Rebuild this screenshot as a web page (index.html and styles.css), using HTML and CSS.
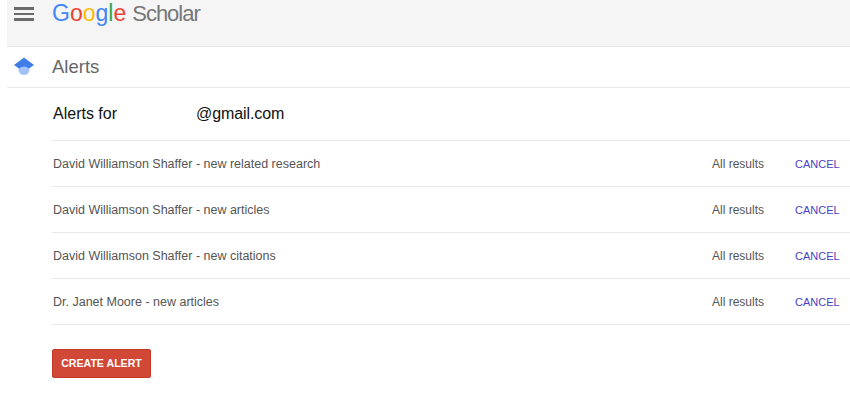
FILE: index.html
```html
<!DOCTYPE html>
<html lang="en">
<head>
  <meta charset="UTF-8">
  <title>Google Scholar Alerts</title>
  <link rel="stylesheet" href="styles.css">
</head>
<body>
  <div class="topbar">
    <div class="menu-icon"><span></span><span></span><span></span></div>
    <div class="logo"><span class="g-blue">G</span><span class="g-red">o</span><span class="g-yellow">o</span><span class="g-blue">g</span><span class="g-green">l</span><span class="g-red">e</span><span class="logo-scholar">Scholar</span></div>
  </div>
  <div class="titlebar">
    <svg class="cap" width="20" height="20" viewBox="0 0 20 20">
      <circle cx="10" cy="12.5" r="5.5" fill="#a1c2fa"/>
      <path d="M0 8 L10 0.5 L20 8 L15 11.5 Q10 7.5 5 11.5 Z" fill="#3f7de8"/>
    </svg>
    <h1>Alerts</h1>
  </div>
  <div class="content">
    <h2 class="alerts-for"><span>Alerts for</span><span class="email">@gmail.com</span></h2>
    <div class="row">
      <div class="name">David Williamson Shaffer - new related research</div>
      <div class="type">All results</div>
      <a class="cancel" href="#">CANCEL</a>
    </div>
    <div class="row">
      <div class="name">David Williamson Shaffer - new articles</div>
      <div class="type">All results</div>
      <a class="cancel" href="#">CANCEL</a>
    </div>
    <div class="row">
      <div class="name">David Williamson Shaffer - new citations</div>
      <div class="type">All results</div>
      <a class="cancel" href="#">CANCEL</a>
    </div>
    <div class="row">
      <div class="name">Dr. Janet Moore - new articles</div>
      <div class="type">All results</div>
      <a class="cancel" href="#">CANCEL</a>
    </div>
    <button class="create">CREATE ALERT</button>
  </div>
</body>
</html>
```

FILE: styles.css
```css
body { margin: 0; padding-left: 7px; background: #fff; font-family: "Liberation Sans", Arial, sans-serif; color: #444; overflow: hidden; }
.topbar { height: 46px; background: #f5f5f5; border-bottom: 1px solid #e5e5e5; display: flex; align-items: flex-start; }
.menu-icon { width: 20px; margin: 7px 0 0 7px; display: flex; flex-direction: column; gap: 3px; }
.menu-icon span { display: block; height: 2.5px; background: #6a6a6a; }
.logo { margin: 0 0 0 18px; font-size: 23px; line-height: 26px; }
.logo-scholar { color: #777; margin-left: 6px; font-size: 22px; letter-spacing: -1px; }
.g-blue { color: #4285f4; }
.g-red { color: #ea4335; }
.g-yellow { color: #fbbc05; }
.g-green { color: #34a853; }
.titlebar { height: 40px; border-bottom: 1px solid #e8e8e8; display: flex; align-items: center; }
.cap { margin-left: 7px; }
.titlebar h1 { margin: 0 0 0 18px; font-size: 18.5px; font-weight: normal; color: #666; }
.content { margin-left: 45px; }
.alerts-for { margin: 0; padding-left: 1px; height: 52px; display: flex; align-items: center; font-size: 16px; font-weight: normal; color: #111; border-bottom: 1px solid #e8e8e8; }
.email { margin-left: 79px; letter-spacing: -0.1px; }
.row { height: 45px; display: flex; align-items: center; border-bottom: 1px solid #e8e8e8; font-size: 12.5px; color: #555; }
.name { flex: 1; padding-left: 1px; }
.type { width: 83px; font-size: 12px; }
.cancel { width: 55px; color: #4b40c8; font-size: 11px; text-decoration: none; }
.create { display: block; margin-top: 24px; width: 99px; height: 29px; padding: 0 0 2px; background: #d14836; border: 1px solid #c53727; border-radius: 2px; color: #fff; font-family: "Liberation Sans", Arial, sans-serif; font-size: 10.6px; font-weight: bold; }
```
